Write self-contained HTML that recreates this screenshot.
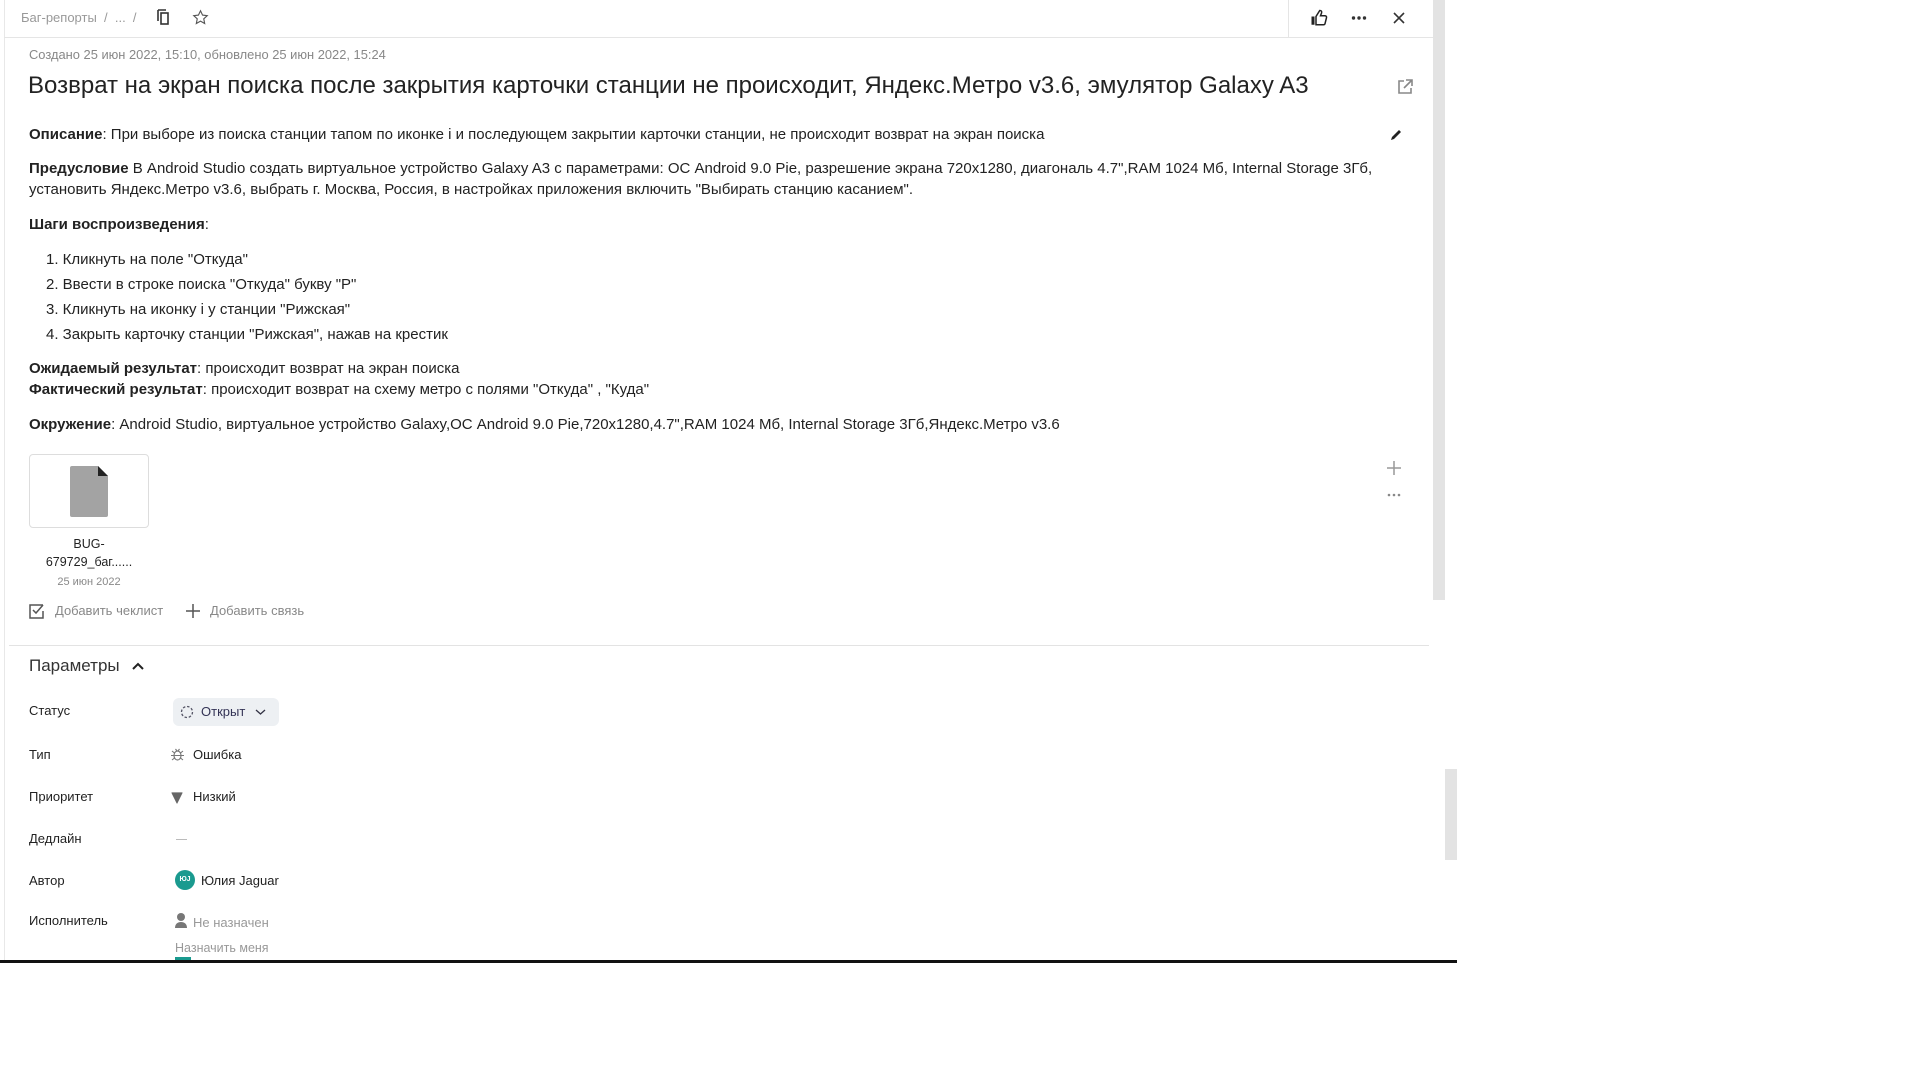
<!DOCTYPE html>
<html><head><meta charset="utf-8"><style>
*{margin:0;padding:0;box-sizing:border-box}
body{width:1920px;height:1080px;background:#fff;font-family:"Liberation Sans",sans-serif;color:#222;position:relative;overflow:hidden}
.a{position:absolute;white-space:nowrap}
.t{font-size:15px;line-height:20px}
b{font-weight:bold}
.g{color:#888}
.lbl{left:29px;font-size:13px;color:#222}
.val{font-size:13px}
</style></head><body>
<div class="a" style="left:4px;top:0;width:1px;height:960px;background:#e8e8e8"></div>
<div class="a" style="left:4px;top:37px;width:1429px;height:1px;background:#e5e5e5"></div>
<div class="a" style="left:1288px;top:0;width:1px;height:37px;background:#e5e5e5"></div>
<div class="a" style="left:1433px;top:0;width:12px;height:600px;background:#e3e3e3"></div>
<div class="a" style="left:1445px;top:769px;width:12px;height:91px;background:#e3e3e3"></div>
<div class="a" style="left:0;top:960px;width:1457px;height:3px;background:#111"></div>

<div class="a g" style="left:21px;top:10px;font-size:13px;color:#999">Баг-репорты &nbsp;/ &nbsp;... &nbsp;/</div>
<svg class="a" style="left:155px;top:9px" width="16" height="17" viewBox="0 0 16 17"><path d="M3 1h8M3 1v11" stroke="#333" stroke-width="1.6" fill="none"/><rect x="6" y="4" width="7" height="11" stroke="#333" stroke-width="1.6" fill="none"/></svg>
<svg class="a" style="left:192px;top:9px" width="17" height="17" viewBox="0 0 24 24"><path d="M12 2.5l2.9 6.1 6.6.8-4.9 4.5 1.3 6.6L12 17.2l-5.9 3.3 1.3-6.6-4.9-4.5 6.6-.8z" fill="none" stroke="#555" stroke-width="1.6"/></svg>
<svg class="a" style="left:1310px;top:9px" width="18" height="18" viewBox="0 0 24 24"><path d="M2 10h4v11H2z" fill="#222"/><path d="M8 10l5-8c2 0 3 1 2.5 3L14 9h6c1.5 0 2.3 1.3 2 2.6l-2 8c-.3 1-1.2 1.4-2 1.4H8z" fill="none" stroke="#222" stroke-width="2"/></svg>
<svg class="a" style="left:1351px;top:15px" width="16" height="6" viewBox="0 0 16 6"><circle cx="2.5" cy="3" r="1.7" fill="#333"/><circle cx="8" cy="3" r="1.7" fill="#333"/><circle cx="13.5" cy="3" r="1.7" fill="#333"/></svg>
<svg class="a" style="left:1392px;top:11px" width="14" height="14" viewBox="0 0 14 14"><path d="M2 2l10 10M12 2L2 12" stroke="#333" stroke-width="1.6"/></svg>

<div class="a" style="left:29px;top:47px;font-size:12.9px;color:#888">Создано 25 июн 2022, 15:10, обновлено 25 июн 2022, 15:24</div>
<div class="a" style="left:28px;top:72px;font-size:24px;color:#222">Возврат на экран поиска после закрытия карточки станции не происходит, Яндекс.Метро v3.6, эмулятор Galaxy A3</div>
<svg class="a" style="left:1396px;top:78px" width="18" height="18" viewBox="0 0 18 18"><path d="M8 3H3v12h12v-5M10 2h6v6M16 2l-8 8" fill="none" stroke="#888" stroke-width="1.6"/></svg>
<svg class="a" style="left:1389px;top:128px" width="14" height="14" viewBox="0 0 14 14"><path d="M2 12l1-3 7-7 2 2-7 7z" fill="#222"/></svg>

<div class="a t" style="left:29px;top:125px"><b>Описание</b>: При выборе из поиска станции тапом по иконке i и последующем закрытии карточки станции, не происходит возврат на экран поиска</div>
<div class="a t" style="left:29px;top:159px"><b>Предусловие</b> В Android Studio создать виртуальное устройство Galaxy A3 с параметрами: ОС Android 9.0 Pie, разрешение экрана 720x1280, диагональ 4.7",RAM 1024 Мб, Internal Storage 3Гб,</div>
<div class="a t" style="left:29px;top:180px">установить Яндекс.Метро v3.6, выбрать г. Москва, Россия, в настройках приложения включить "Выбирать станцию касанием".</div>
<div class="a t" style="left:29px;top:215px"><b>Шаги воспроизведения</b>:</div>
<div class="a t" style="left:46px;top:250px">1. Кликнуть на поле "Откуда"</div>
<div class="a t" style="left:46px;top:275px">2. Ввести в строке поиска "Откуда" букву "Р"</div>
<div class="a t" style="left:46px;top:300px">3. Кликнуть на иконку i у станции "Рижская"</div>
<div class="a t" style="left:46px;top:325px">4. Закрыть карточку станции "Рижская", нажав на крестик</div>
<div class="a t" style="left:29px;top:359px"><b>Ожидаемый результат</b>: происходит возврат на экран поиска</div>
<div class="a t" style="left:29px;top:380px"><b>Фактический результат</b>: происходит возврат на схему метро с полями "Откуда" , "Куда"</div>
<div class="a t" style="left:29px;top:415px"><b>Окружение</b>: Android Studio, виртуальное устройство Galaxy,ОС Android 9.0 Pie,720x1280,4.7",RAM 1024 Мб, Internal Storage 3Гб,Яндекс.Метро v3.6</div>

<div class="a" style="left:29px;top:454px;width:120px;height:74px;border:1px solid #ddd;border-radius:4px"></div>
<svg class="a" style="left:70px;top:466px" width="38" height="51" viewBox="0 0 38 51"><path d="M2 0h26l10 10v39a2 2 0 0 1-2 2H2a2 2 0 0 1-2-2V2a2 2 0 0 1 2-2z" fill="#a3a3a3"/><path d="M28 0l10 10H28z" fill="#222"/></svg>
<div class="a" style="left:29px;top:535px;width:120px;text-align:center;font-size:12.5px;line-height:18px;white-space:normal">BUG-<br>679729_баг......</div>
<div class="a" style="left:29px;top:576px;width:120px;text-align:center;font-size:11px;color:#888">25 июн 2022</div>
<svg class="a" style="left:1386px;top:460px" width="16" height="16" viewBox="0 0 16 16"><path d="M8 1v14M1 8h14" stroke="#999" stroke-width="1.5"/></svg>
<svg class="a" style="left:1387px;top:493px" width="14" height="4" viewBox="0 0 14 4"><circle cx="2" cy="2" r="1.3" fill="#888"/><circle cx="7" cy="2" r="1.3" fill="#888"/><circle cx="12" cy="2" r="1.3" fill="#888"/></svg>

<svg class="a" style="left:29px;top:603px" width="16" height="16" viewBox="0 0 16 16"><path d="M14 2H1v13h13V8" fill="none" stroke="#555" stroke-width="1.5"/><path d="M4 7l3 3 7-8" fill="none" stroke="#555" stroke-width="1.5"/></svg>
<div class="a g" style="left:55px;top:603px;font-size:13px">Добавить чеклист</div>
<svg class="a" style="left:185px;top:603px" width="16" height="16" viewBox="0 0 16 16"><path d="M8 1v14M1 8h14" stroke="#555" stroke-width="1.5"/></svg>
<div class="a g" style="left:210px;top:603px;font-size:13px">Добавить связь</div>

<div class="a" style="left:9px;top:645px;width:1420px;height:1px;background:#e3e3e3"></div>
<div class="a" style="left:29px;top:656px;font-size:17px;color:#333">Параметры</div>
<svg class="a" style="left:131px;top:660px" width="14" height="12" viewBox="0 0 14 12"><path d="M2 9l5-5 5 5" fill="none" stroke="#222" stroke-width="2"/></svg>

<div class="a lbl" style="top:703px">Статус</div>
<div class="a" style="left:173px;top:698px;width:106px;height:28px;background:#edf0f3;border-radius:6px"></div>
<svg class="a" style="left:180px;top:705px" width="14" height="14" viewBox="0 0 14 14"><circle cx="7" cy="7" r="5.5" fill="none" stroke="#556" stroke-width="1.3" stroke-dasharray="2.5 1.8"/></svg>
<div class="a val" style="left:201px;top:704px;color:#335">Открыт</div>
<svg class="a" style="left:255px;top:708px" width="11" height="8" viewBox="0 0 11 8"><path d="M1 2l4.5 4L10 2" fill="none" stroke="#334" stroke-width="1.3"/></svg>

<div class="a lbl" style="top:747px">Тип</div>
<svg class="a" style="left:170px;top:747px" width="15" height="15" viewBox="0 0 15 15"><ellipse cx="7.5" cy="8.5" rx="3.5" ry="4.5" fill="none" stroke="#777" stroke-width="1.2"/><path d="M1 8.5h13M2 4l2.5 2M13 4l-2.5 2M2 13l2.5-2M13 13l-2.5-2M5.5 2l1.5 2M9.5 2L8 4" stroke="#777" stroke-width="1.1"/></svg>
<div class="a val" style="left:193px;top:747px">Ошибка</div>

<div class="a lbl" style="top:789px">Приоритет</div>
<svg class="a" style="left:171px;top:792px" width="12" height="12" viewBox="0 0 14 14"><path d="M1 1h12L7 13z" fill="#666" stroke="#666" stroke-linejoin="round"/></svg>
<div class="a val" style="left:193px;top:789px">Низкий</div>

<div class="a lbl" style="top:831px">Дедлайн</div>
<div class="a" style="left:176px;top:839px;width:11px;height:1px;background:#bbb"></div>

<div class="a lbl" style="top:873px">Автор</div>
<div class="a" style="left:175px;top:870px;width:20px;height:20px;border-radius:50%;background:#1a9a8f;color:#fff;font-size:7px;font-weight:bold;text-align:center;line-height:20px">ЮJ</div>
<div class="a val" style="left:201px;top:873px">Юлия Jaguar</div>

<div class="a lbl" style="top:913px">Исполнитель</div>
<svg class="a" style="left:174px;top:912px" width="14" height="17" viewBox="0 0 14 17"><circle cx="7" cy="5" r="4" fill="#777"/><path d="M1 16c0-4 2.5-6 6-6s6 2 6 6z" fill="#777"/></svg>
<div class="a val" style="left:193px;top:915px;color:#999">Не назначен</div>
<div class="a val" style="left:175px;top:941px;color:#999;font-size:12.5px">Назначить меня</div>
<div class="a" style="left:175px;top:957px;width:16px;height:3px;background:#1a9a8f"></div>
</body></html>
